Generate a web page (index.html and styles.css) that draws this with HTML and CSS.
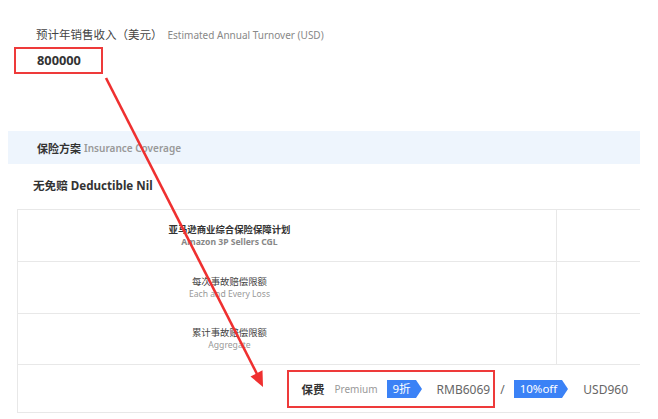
FILE: index.html
```html
<!DOCTYPE html>
<html lang="zh">
<head>
<meta charset="utf-8">
<title>Insurance</title>
<link rel="stylesheet" href="styles.css">
</head>
<body>
<div class="page">
  <div class="field">
    <div class="field-label"><span class="cn">预计年销售收入（美元）</span><span class="en">Estimated Annual Turnover (USD)</span></div>
    <div class="field-value">800000</div>
  </div>

  <div class="section-head"><span class="cn">保险方案</span><span class="en">Insurance Coverage</span></div>

  <div class="deductible">无免赔 Deductible Nil</div>

  <div class="plan">
    <div class="row">
      <div class="cell main"><div class="t1 bold">亚马逊商业综合保险保障计划</div><div class="t2 bold">Amazon 3P Sellers CGL</div></div>
      <div class="cell side"></div>
    </div>
    <div class="row">
      <div class="cell main"><div class="t1">每次事故赔偿限额</div><div class="t2">Each and Every Loss</div></div>
      <div class="cell side"></div>
    </div>
    <div class="row">
      <div class="cell main"><div class="t1">累计事故赔偿限额</div><div class="t2">Aggregate</div></div>
      <div class="cell side"></div>
    </div>
    <div class="row last">
      <div class="premium">
        <span class="mark">
          <span class="p-cn">保费</span>
          <span class="p-en">Premium</span>
          <span class="badge">9折</span>
          <span class="price">RMB6069</span>
        </span>
        <span class="slash">/</span>
        <span class="badge">10%off</span>
        <span class="price usd">USD960</span>
      </div>
    </div>
  </div>

  <svg class="arrow" width="658" height="419" viewBox="0 0 658 419">
    <line x1="106" y1="78" x2="257" y2="374" stroke="#ef3030" stroke-width="2.6"/>
    <polygon points="263,387 250.5,376.5 262.5,370.3" fill="#ef3030"/>
  </svg>
</div>
</body>
</html>
```
FILE: styles.css
```css
* { box-sizing: border-box; }
html, body { margin: 0; padding: 0; background: #fff; }
body {
  font-family: "Noto Sans", "Noto Sans CJK SC", sans-serif;
  color: #333;
  width: 658px;
  height: 419px;
  overflow: hidden;
}
.page {
  position: relative;
  padding-top: 27px;
  width: 658px;
  height: 419px;
}
.field-label {
  margin-left: 36px;
  height: 16px;
  line-height: 16px;
  display: flex;
  align-items: center;
  gap: 5px;
}
.field-label .cn { font-size: 11.5px; color: #444; }
.field-label .en { font-size: 10px; color: #888; }
.field-value {
  margin: 4px 0 0 14px;
  width: 89px;
  height: 27px;
  border: 2px solid #ee3a3a;
  padding-left: 21px;
  font-size: 12.8px;
  font-weight: 700;
  line-height: 23px;
  color: #333;
}
.section-head {
  margin: 57px 18px 0 8px;
  height: 33px;
  background: #eef5fd;
  display: flex;
  align-items: center;
  padding-left: 29px;
  gap: 3px;
}
.section-head .cn { font-size: 11px; font-weight: 700; color: #333; }
.section-head .en { font-size: 10px; font-weight: 600; color: #999; }
.deductible {
  margin: 12px 0 0 33px;
  height: 20px;
  line-height: 20px;
  font-size: 11.6px;
  font-weight: 700;
  color: #333;
}
.plan {
  margin: 13px 18px 0 17px;
  border-left: 1px solid #e8e8e8;
}
.row {
  display: flex;
  border-top: 1px solid #e8e8e8;
  height: 52px;
}
.row:nth-child(3) { height: 51px; }
.row.last {
  height: 49px;
  border-bottom: 1px solid #e8e8e8;
}
.cell.main {
  width: 539px;
  border-right: 1px solid #e8e8e8;
  padding-right: 115px;
  display: flex;
  flex-direction: column;
  align-items: center;
  justify-content: center;
}
.cell.side { flex: 1; }
.t1 { font-size: 9.4px; line-height: 12px; color: #444; }
.t2 { font-size: 8.6px; line-height: 12px; color: #999; }
.bold.t1 { font-weight: 700; color: #333; }
.bold.t2 { font-weight: 700; color: #888; }
.premium {
  flex: 1;
  display: flex;
  justify-content: flex-end;
  align-items: center;
  padding-right: 12px;
  padding-top: 1px;
}
.mark {
  display: flex;
  align-items: center;
  height: 38px;
  border: 2px solid #ee3a3a;
  padding: 0 3px 0 12px;
}
.p-cn { font-size: 11.5px; font-weight: 700; color: #333; }
.p-en { font-size: 10px; color: #999; margin-left: 10px; }
.badge {
  position: relative;
  height: 18px;
  line-height: 18px;
  background: #3b82f6;
  color: #fff;
  font-size: 11.5px;
  padding: 0 5px 0 6px;
  margin-right: 6px;
}
.badge::after {
  content: "";
  position: absolute;
  right: -6px;
  top: 0;
  border-left: 6px solid #3b82f6;
  border-top: 9px solid transparent;
  border-bottom: 9px solid transparent;
}
.p-en + .badge { margin-left: 9px; }
.price { font-size: 12px; color: #666; margin-left: 15px; }
.slash { font-size: 12px; color: #666; margin: 0 9px 0 5px; }
.price.usd { margin-left: 15px; }
.arrow {
  position: absolute;
  left: 0;
  top: 0;
  pointer-events: none;
}
```
